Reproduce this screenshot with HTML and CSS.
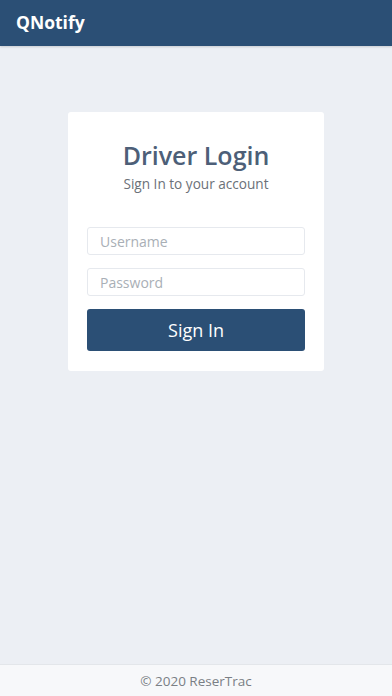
FILE: index.html
```html
<!DOCTYPE html>
<html>
<head>
<meta charset="utf-8">
<link rel="stylesheet" href="styles.css">
</head>
<body>
<div class="app">
  <header class="topbar"><span class="brand">QNotify</span></header>
  <main class="main">
    <div class="card">
      <h1 class="title">Driver Login</h1>
      <p class="subtitle">Sign In to your account</p>
      <form class="form">
        <input class="field" type="text" placeholder="Username">
        <input class="field" type="password" placeholder="Password">
        <button class="btn" type="button">Sign In</button>
      </form>
    </div>
  </main>
  <footer class="footer">© 2020 ReserTrac</footer>
</div>
</body>
</html>
```
FILE: styles.css
```css
html, body {
  margin: 0;
  padding: 0;
  height: 100%;
}
body {
  font-family: "Open Sans", "Noto Sans", sans-serif;
  background: #eceff4;
}
.app {
  display: flex;
  flex-direction: column;
  height: 696px;
}
.topbar {
  height: 46px;
  background: #2b4f75;
  display: flex;
  align-items: center;
  padding: 0 16px;
  box-shadow: 0 1px 2px rgba(0,0,0,0.15);
  flex: none;
}
.brand {
  color: #fff;
  font-weight: 700;
  font-size: 17.5px;
  margin-top: -2px;
}
.main {
  flex: 1;
  display: flex;
  justify-content: center;
  align-items: flex-start;
  padding-top: 66px;
}
.card {
  width: 256px;
  box-sizing: border-box;
  background: #fff;
  border-radius: 3px;
  padding: 26px 19px 20px;
  text-align: center;
}
.title {
  margin: 0;
  font-size: 25px;
  font-weight: 600;
  color: #4d5f78;
  line-height: 34px;
}
.subtitle {
  margin: 2px 0 0;
  font-size: 13.6px;
  color: #6b7178;
  line-height: 20px;
}
.form {
  margin-top: 33px;
  display: flex;
  flex-direction: column;
  gap: 13px;
}
.field {
  height: 28px;
  box-sizing: border-box;
  border: 1px solid #e6e9ee;
  border-radius: 3px;
  padding: 0 12px;
  font-family: inherit;
  font-size: 14px;
  color: #333;
  outline: none;
}
.field::placeholder {
  color: #a9afb6;
}
.btn {
  height: 42px;
  border: none;
  border-radius: 3px;
  background: #2b4f75;
  color: #fff;
  font-family: inherit;
  font-size: 18px;
}
.footer {
  height: 32px;
  flex: none;
  background: #f7f8fa;
  border-top: 1px solid #e3e6ea;
  box-sizing: border-box;
  display: flex;
  align-items: center;
  justify-content: center;
  font-size: 13.5px;
  color: #7a7f85;
}
```
